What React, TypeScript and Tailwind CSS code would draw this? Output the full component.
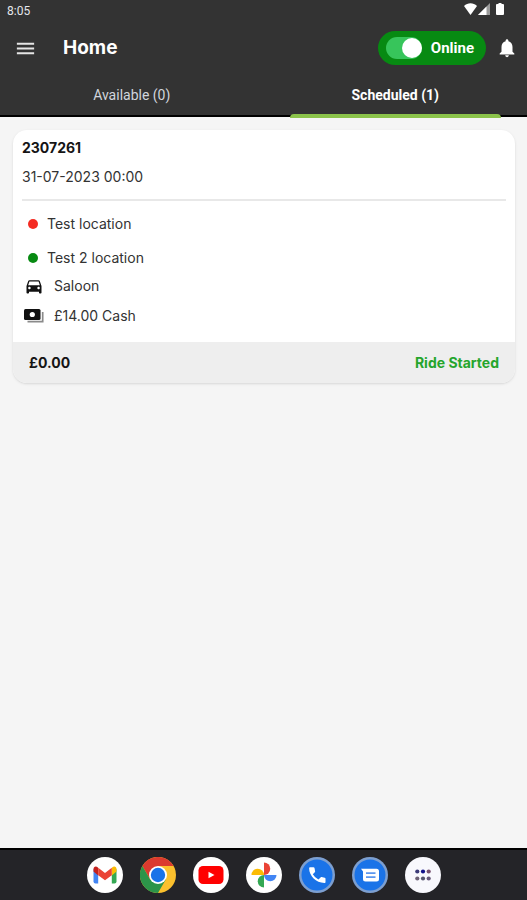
import { useState } from "react";
import type { ReactNode } from "react";
import { MdDirectionsCar, MdMenu, MdNotifications } from "react-icons/md";

function StatusBar() {
  return (
    <div className="flex h-[22px] items-center justify-between pl-[7px] pr-[23px] font-['Roboto',sans-serif] text-xs text-gray-200">
      <span>8:05</span>
      <div className="flex items-center pb-1">
        <svg width="13" height="12" viewBox="0 0 13 12" fill="#fff">
          <path d="M0 3C3.600-.6 9.400-.6 13 3L6.500 12z" />
        </svg>
        <svg className="ml-px" width="12" height="12" viewBox="0 0 12 12">
          <path d="M12 0v12H0z" fill="#9a9a9a" />
          <path d="M8.500 3.500V12H0z" fill="#fff" />
        </svg>
        <svg className="ml-[6px]" width="8" height="12" viewBox="0 0 8 12" fill="#fff">
          <path d="M2.500 0h3v1H7q1 0 1 1v9q0 1-1 1H1q-1 0-1-1V2q0-1 1-1h1.500z" />
        </svg>
      </div>
    </div>
  );
}

function OnlineSwitch() {
  const [online, setOnline] = useState(true);

  return (
    <label className="flex h-[34px] cursor-pointer items-center gap-[9px] rounded-full bg-[#078a12] pl-2 pr-3">
      <input
        type="checkbox"
        role="switch"
        className="peer sr-only"
        checked={online}
        onChange={(e) => setOnline(e.target.checked)}
      />
      <span className="flex h-[22px] w-9 items-center rounded-full bg-[#37c55b] peer-checked:justify-end">
        <span className="size-5 rounded-full bg-white" />
      </span>
      <span className="font-['Roboto',sans-serif] text-[15px] font-bold text-white">Online</span>
    </label>
  );
}

function Tab(params: { label: string; active: boolean; onClick: () => void }) {
  return (
    <button
      type="button"
      role="tab"
      aria-selected={params.active}
      onClick={params.onClick}
      className={
        params.active
          ? "relative flex-1 text-sm font-bold text-white"
          : "relative flex-1 text-sm text-gray-300"
      }
    >
      {params.label}
      {params.active && (
        <span className="absolute inset-x-[10%] -bottom-[3px] h-1 rounded-t-sm bg-[#8bc34a]" />
      )}
    </button>
  );
}

function CashIcon() {
  return (
    <svg width="20" height="20" viewBox="0 0 20 20">
      <path d="M18.700 6v9.700H3.500" fill="none" stroke="#8a8a8a" strokeWidth="1.700" />
      <rect x="0" y="3" width="16.500" height="11" rx="1.500" fill="#111" />
      <circle cx="8.300" cy="8.500" r="2.600" fill="#fff" />
    </svg>
  );
}

function RideCard() {
  return (
    <article className="overflow-hidden rounded-[14px] bg-white text-sm text-[#333] shadow-sm">
      <div className="px-[9px] pb-4 pt-2">
        <h2 className="leading-5 font-bold text-[#151515]">2307261</h2>
        <p className="mt-[9px] leading-5">31-07-2023 00:00</p>
        <hr className="mt-3 border-t-2 border-[#e8e8e8]" />
        <ul className="mt-[13px]">
          <li className="flex h-5 items-center gap-[9px] pl-[6px]">
            <span className="size-[10px] rounded-full bg-[#f42b22]" />
            Test location
          </li>
          <li className="mt-[14px] flex h-5 items-center gap-[9px] pl-[6px]">
            <span className="size-[10px] rounded-full bg-[#078a12]" />
            Test 2 location
          </li>
          <li className="mt-2 flex h-5 items-center gap-[10px] pl-[2px]">
            <MdDirectionsCar size={20} color="#111" />
            Saloon
          </li>
          <li className="mt-[10px] flex h-5 items-center gap-[10px] pl-[2px]">
            <CashIcon />
            £14.00 Cash
          </li>
        </ul>
      </div>
      <footer className="flex h-[41px] items-center justify-between bg-[#eee] px-4 font-bold">
        <span className="text-[#151515]">£0.00</span>
        <span className="text-[#25a52c]">Ride Started</span>
      </footer>
    </article>
  );
}

function GmailIcon() {
  return (
    <svg viewBox="0 0 36 36">
      <circle cx="18" cy="18" r="18" fill="#fff" />
      <path d="M6.500 12v12.500q0 2 2 2h2.700V16z" fill="#4285f4" />
      <path d="M24.800 16v10.500h2.700q2 0 2-2V12z" fill="#34a853" />
      <path d="M24.800 11v7.500l4.700-4v-2.500c0-2.600-2.600-3.300-4.400-1.500z" fill="#fbbc04" />
      <path d="M11.200 11v7.500l-4.700-4v-2.500c0-2.600 2.600-3.300 4.400-1.500z" fill="#c5221f" />
      <path d="M11.200 10.800L18 16l6.800-5.200v7.400L18 23.300l-6.800-5.100z" fill="#ea4335" />
    </svg>
  );
}

function ChromeIcon() {
  return (
    <svg viewBox="0 0 36 36">
      <circle cx="18" cy="18" r="18" fill="#fbc02d" />
      <path d="M2.400 9A18 18 0 0 1 33.600 9H18v9l-7.800 4.500z" fill="#db3a2f" />
      <path d="M2.400 9A18 18 0 0 0 18 36l7.800-13.500H10.200z" fill="#2c9449" />
      <circle cx="18" cy="18" r="9" fill="#fff" />
      <circle cx="18" cy="18" r="7.200" fill="#1a73e8" />
    </svg>
  );
}

function YoutubeIcon() {
  return (
    <svg viewBox="0 0 36 36">
      <circle cx="18" cy="18" r="18" fill="#fff" />
      <rect x="5.500" y="9" width="25" height="18" rx="4.500" fill="#f00" />
      <path d="M15.500 14.700v6.600l6-3.300z" fill="#fff" />
    </svg>
  );
}

function PhotosIcon() {
  return (
    <svg viewBox="0 0 36 36">
      <circle cx="18" cy="18" r="18" fill="#fff" />
      <path d="M18 5.500a6.200 6.200 0 0 1 0 12.500z" fill="#ea4335" />
      <path d="M30.500 18a6.200 6.200 0 0 1-12.500 0z" fill="#4285f4" />
      <path d="M18 30.500a6.200 6.200 0 0 1 0-12.500z" fill="#34a853" />
      <path d="M5.500 18a6.200 6.200 0 0 1 12.500 0z" fill="#fbbc04" />
    </svg>
  );
}

function PhoneIcon() {
  return (
    <svg viewBox="0 0 36 36">
      <circle cx="18" cy="18" r="18" fill="#7d9fd0" />
      <circle cx="18" cy="18" r="15.500" fill="#1a73e8" />
      <path
        d="M11.200 10.200h3.300c.5 0 .9.400 1 .9l.6 3.100c.1.400 0 .8-.3 1l-2 2.100a14 14 0 0 0 5.600 5.300l2.200-2.200c.3-.3.600-.4 1-.3l3.100.6c.5.100.8.500.8 1v3.300c0 .6-.5 1.100-1.100 1C16.900 25.700 10.300 19.200 10.100 11.300c0-.6.500-1.100 1.100-1.100z"
        fill="#fff"
      />
    </svg>
  );
}

function MessagesIcon() {
  return (
    <svg viewBox="0 0 36 36">
      <circle cx="18" cy="18" r="18" fill="#7d9fd0" />
      <circle cx="18" cy="18" r="15.500" fill="#1a73e8" />
      <path d="M9 11.800h15.500q2.500 0 2.500 2.500v7.700q0 2.500-2.500 2.500h-11Q11 24.500 11 22v-7.500z" fill="#fff" />
      <path d="M14 16.200h9.500M14 20.200h9.500" stroke="#5c97ee" strokeWidth="1.700" />
    </svg>
  );
}

function AllAppsIcon() {
  return (
    <svg viewBox="0 0 36 36">
      <circle cx="18" cy="18" r="18" fill="#f8f8fd" />
      <circle cx="12.300" cy="14.500" r="2.100" fill="#3b3a78" />
      <circle cx="18" cy="14.500" r="2.100" fill="#12128a" />
      <circle cx="23.700" cy="14.500" r="2.100" fill="#76506f" />
      <circle cx="12.300" cy="21.500" r="2.100" fill="#6d6176" />
      <circle cx="18" cy="21.500" r="2.100" fill="#55556e" />
      <circle cx="23.700" cy="21.500" r="2.100" fill="#66597a" />
    </svg>
  );
}

const dockApps: { name: string; icon: ReactNode }[] = [
  { name: "Gmail", icon: <GmailIcon /> },
  { name: "Chrome", icon: <ChromeIcon /> },
  { name: "YouTube", icon: <YoutubeIcon /> },
  { name: "Photos", icon: <PhotosIcon /> },
  { name: "Phone", icon: <PhoneIcon /> },
  { name: "Messages", icon: <MessagesIcon /> },
  { name: "All apps", icon: <AllAppsIcon /> },
];

export default function App() {
  const [tab, setTab] = useState(1);

  return (
    <div className="flex min-h-screen flex-col bg-[#f5f5f5] font-['Inter',sans-serif]">
      <header className="border-b-2 border-black bg-[#333]">
        <StatusBar />
        <div className="flex h-[52px] items-center pl-[14px] pr-[9px]">
          <button type="button" aria-label="Menu">
            <MdMenu size={23} color="#e5e5e5" />
          </button>
          <h1 className="ml-[26px] flex-1 text-[19px] font-bold text-white">Home</h1>
          <OnlineSwitch />
          <button type="button" aria-label="Notifications" className="ml-[10px]">
            <MdNotifications size={22} color="#fff" />
          </button>
        </div>
        <div role="tablist" className="flex h-[41px] font-['Roboto',sans-serif]">
          <Tab label="Available (0)" active={tab === 0} onClick={() => setTab(0)} />
          <Tab label="Scheduled (1)" active={tab === 1} onClick={() => setTab(1)} />
        </div>
      </header>

      <main className="flex-1 pl-[13px] pr-3 pt-[13px]">{tab === 1 && <RideCard />}</main>

      <nav
        aria-label="Dock"
        className="flex h-[52px] items-center justify-center gap-[17px] border-t-2 border-black bg-[#242428]"
      >
        {dockApps.map((app) => (
          <button type="button" key={app.name} aria-label={app.name} className="size-9">
            {app.icon}
          </button>
        ))}
      </nav>
    </div>
  );
}
